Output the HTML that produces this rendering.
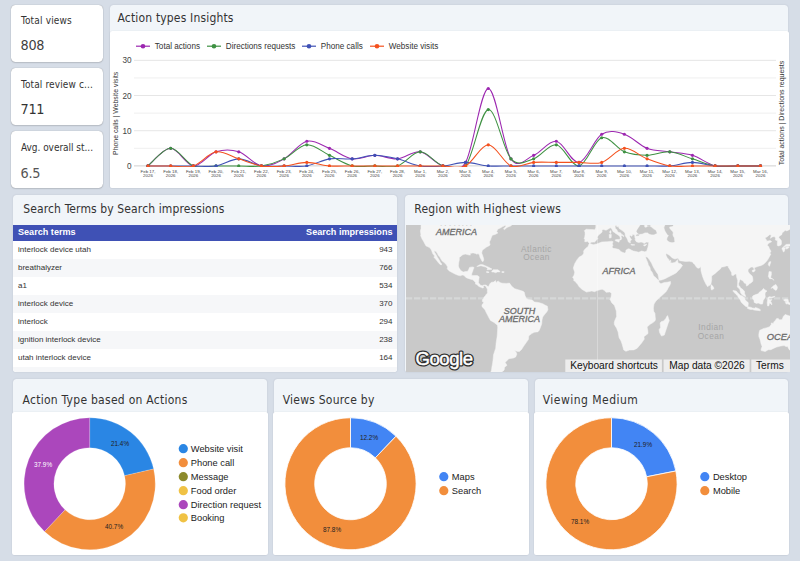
<!DOCTYPE html>
<html><head><meta charset="utf-8"><title>Dashboard</title>
<style>
html,body{margin:0;padding:0}
body{width:800px;height:561px;overflow:hidden;background:#d6dde7;position:relative;font-family:"Liberation Sans",sans-serif}
.abs{position:absolute}
.card{position:absolute;left:11.3px;width:92px;height:56.9px;background:#fff;border-radius:4.5px;box-shadow:0 0 1px rgba(0,0,0,.38),0 1px 1.5px rgba(0,0,0,.12)}
.card .l{position:absolute;left:9.7px;top:10.1px;font:10px "DejaVu Sans Condensed","Liberation Sans",sans-serif;letter-spacing:.17px;color:#333;white-space:nowrap}
.card .v{position:absolute;left:9.3px;top:31.7px;font:14.3px "DejaVu Sans Condensed","Liberation Sans",sans-serif;letter-spacing:-.3px;color:#444;white-space:nowrap}
.panel{position:absolute;background:#f1f5f9;border-radius:3.5px 3.5px 2px 2px;box-shadow:0 0 1.5px rgba(40,50,70,.18)}
.panel .t{position:absolute;left:7.5px;top:5.5px;font:12px "DejaVu Sans Condensed","Liberation Sans",sans-serif;letter-spacing:.17px;color:#333;white-space:nowrap}
.inner{position:absolute;left:-.9px;right:-.9px;bottom:0;background:#fff;border-radius:2.5px 2.5px 2px 2px;box-shadow:0 0 1.5px rgba(40,50,70,.12)}
.th{height:16px;background:#3f51b5;color:#fff;font:bold 9.1px/15.4px "Liberation Sans",sans-serif;padding:0 4.5px 0 5px;display:flex;justify-content:space-between}
.tr{height:18px;font:8px/17.3px "Liberation Sans",sans-serif;color:#333;padding:0 4.5px 0 5px;background:#fff;display:flex;justify-content:space-between}
.tr.alt{background:#f6f7f9}
</style></head><body>
<div class="card" style="top:4.9px"><div class="l" style="top:9.8px">Total views</div><div class="v" style="top:31.8px;color:#3f3f3f">808</div></div>
<div class="card" style="top:67.8px"><div class="l" style="top:10.9px;letter-spacing:.13px">Total review c...</div><div class="v" style="top:32.9px;color:#333">711</div></div>
<div class="card" style="top:131.3px"><div class="l" style="top:10.4px;letter-spacing:-.03px">Avg. overall st...</div><div class="v" style="top:33.4px;color:#555">6.5</div></div>

<div class="panel" style="left:110.3px;top:5px;width:677.8px;height:183px"><div class="t" style="top:5.9px;left:7.2px">Action types Insights</div><div class="inner" style="top:26px;left:-.4px"></div></div>
<svg class="abs" style="left:0;top:0" width="800" height="195" viewBox="0 0 800 195"><line x1="134" x2="776" y1="165.9" y2="165.9" stroke="#d0d0d0" stroke-width="1"/><line x1="134" x2="776" y1="148.31" y2="148.31" stroke="#efefef" stroke-width="1"/><line x1="134" x2="776" y1="130.72" y2="130.72" stroke="#e6e6e6" stroke-width="1"/><line x1="134" x2="776" y1="113.12" y2="113.12" stroke="#efefef" stroke-width="1"/><line x1="134" x2="776" y1="95.53" y2="95.53" stroke="#e6e6e6" stroke-width="1"/><line x1="134" x2="776" y1="77.94" y2="77.94" stroke="#efefef" stroke-width="1"/><line x1="134" x2="776" y1="60.35" y2="60.35" stroke="#e6e6e6" stroke-width="1"/><clipPath id="cp"><rect x="134" y="50" width="645" height="117.1"/></clipPath><g clip-path="url(#cp)"><path d="M148,165.9C151.78,162.97 163.12,148.31 170.69,148.31C178.25,148.31 185.81,165.31 193.37,165.9C200.93,166.49 208.49,154.17 216.06,151.83C223.62,149.48 231.18,149.48 238.74,151.83C246.3,154.17 253.86,164.73 261.43,165.9C268.99,167.07 276.55,162.97 284.11,158.86C291.67,154.76 299.23,143.03 306.8,141.27C314.36,139.51 321.92,145.38 329.48,148.31C337.04,151.24 344.6,157.69 352.17,158.86C359.73,160.04 367.29,155.34 374.85,155.34C382.41,155.34 389.98,159.45 397.54,158.86C405.1,158.28 412.66,150.65 420.22,151.83C427.78,153 435.35,164.14 442.91,165.9C450.47,167.66 458.03,175.28 465.59,162.38C473.15,149.48 480.72,89.08 488.28,88.5C495.84,87.91 503.4,147.72 510.96,158.86C518.52,170 526.09,158.28 533.65,155.34C541.21,152.41 548.77,140.1 556.33,141.27C563.9,142.44 571.46,163.55 579.02,162.38C586.58,161.21 594.14,138.93 601.7,134.24C609.27,129.54 616.83,131.89 624.39,134.24C631.95,136.58 639.51,145.38 647.07,148.31C654.64,151.24 662.2,150.65 669.76,151.83C677.32,153 684.88,153 692.44,155.34C700.01,157.69 707.57,164.14 715.13,165.9C722.69,167.66 730.25,165.9 737.81,165.9C745.38,165.9 756.72,165.9 760.5,165.9" fill="none" stroke="#9c27b0" stroke-width="1.05"/><circle cx="148" cy="165.9" r="1.6" fill="#9c27b0"/><circle cx="170.69" cy="148.31" r="1.6" fill="#9c27b0"/><circle cx="193.37" cy="165.9" r="1.6" fill="#9c27b0"/><circle cx="216.06" cy="151.83" r="1.6" fill="#9c27b0"/><circle cx="238.74" cy="151.83" r="1.6" fill="#9c27b0"/><circle cx="261.43" cy="165.9" r="1.6" fill="#9c27b0"/><circle cx="284.11" cy="158.86" r="1.6" fill="#9c27b0"/><circle cx="306.8" cy="141.27" r="1.6" fill="#9c27b0"/><circle cx="329.48" cy="148.31" r="1.6" fill="#9c27b0"/><circle cx="352.17" cy="158.86" r="1.6" fill="#9c27b0"/><circle cx="374.85" cy="155.34" r="1.6" fill="#9c27b0"/><circle cx="397.54" cy="158.86" r="1.6" fill="#9c27b0"/><circle cx="420.22" cy="151.83" r="1.6" fill="#9c27b0"/><circle cx="442.91" cy="165.9" r="1.6" fill="#9c27b0"/><circle cx="465.59" cy="162.38" r="1.6" fill="#9c27b0"/><circle cx="488.28" cy="88.5" r="1.6" fill="#9c27b0"/><circle cx="510.96" cy="158.86" r="1.6" fill="#9c27b0"/><circle cx="533.65" cy="155.34" r="1.6" fill="#9c27b0"/><circle cx="556.33" cy="141.27" r="1.6" fill="#9c27b0"/><circle cx="579.02" cy="162.38" r="1.6" fill="#9c27b0"/><circle cx="601.7" cy="134.24" r="1.6" fill="#9c27b0"/><circle cx="624.39" cy="134.24" r="1.6" fill="#9c27b0"/><circle cx="647.07" cy="148.31" r="1.6" fill="#9c27b0"/><circle cx="669.76" cy="151.83" r="1.6" fill="#9c27b0"/><circle cx="692.44" cy="155.34" r="1.6" fill="#9c27b0"/><circle cx="715.13" cy="165.9" r="1.6" fill="#9c27b0"/><circle cx="737.81" cy="165.9" r="1.6" fill="#9c27b0"/><circle cx="760.5" cy="165.9" r="1.6" fill="#9c27b0"/><path d="M148,165.9C151.78,162.97 163.12,148.31 170.69,148.31C178.25,148.31 185.81,162.97 193.37,165.9C200.93,168.83 208.49,165.9 216.06,165.9C223.62,165.9 231.18,165.9 238.74,165.9C246.3,165.9 253.86,167.07 261.43,165.9C268.99,164.73 276.55,162.38 284.11,158.86C291.67,155.35 299.23,145.38 306.8,144.79C314.36,144.2 321.92,151.83 329.48,155.34C337.04,158.86 344.6,164.14 352.17,165.9C359.73,167.66 367.29,165.9 374.85,165.9C382.41,165.9 389.98,168.25 397.54,165.9C405.1,163.55 412.66,151.83 420.22,151.83C427.78,151.83 435.35,163.55 442.91,165.9C450.47,168.25 458.03,175.28 465.59,165.9C473.15,156.52 480.72,110.78 488.28,109.61C495.84,108.43 503.4,150.65 510.96,158.86C518.52,167.07 526.09,161.21 533.65,158.86C541.21,156.52 548.77,143.62 556.33,144.79C563.9,145.96 571.46,167.07 579.02,165.9C586.58,164.73 594.14,140.1 601.7,137.75C609.27,135.41 616.83,148.89 624.39,151.83C631.95,154.76 639.51,155.34 647.07,155.34C654.64,155.34 662.2,151.24 669.76,151.83C677.32,152.41 684.88,156.52 692.44,158.86C700.01,161.21 707.57,164.73 715.13,165.9C722.69,167.07 730.25,165.9 737.81,165.9C745.38,165.9 756.72,165.9 760.5,165.9" fill="none" stroke="#3e9142" stroke-width="1.05"/><circle cx="148" cy="165.9" r="1.6" fill="#3e9142"/><circle cx="170.69" cy="148.31" r="1.6" fill="#3e9142"/><circle cx="193.37" cy="165.9" r="1.6" fill="#3e9142"/><circle cx="216.06" cy="165.9" r="1.6" fill="#3e9142"/><circle cx="238.74" cy="165.9" r="1.6" fill="#3e9142"/><circle cx="261.43" cy="165.9" r="1.6" fill="#3e9142"/><circle cx="284.11" cy="158.86" r="1.6" fill="#3e9142"/><circle cx="306.8" cy="144.79" r="1.6" fill="#3e9142"/><circle cx="329.48" cy="155.34" r="1.6" fill="#3e9142"/><circle cx="352.17" cy="165.9" r="1.6" fill="#3e9142"/><circle cx="374.85" cy="165.9" r="1.6" fill="#3e9142"/><circle cx="397.54" cy="165.9" r="1.6" fill="#3e9142"/><circle cx="420.22" cy="151.83" r="1.6" fill="#3e9142"/><circle cx="442.91" cy="165.9" r="1.6" fill="#3e9142"/><circle cx="465.59" cy="165.9" r="1.6" fill="#3e9142"/><circle cx="488.28" cy="109.61" r="1.6" fill="#3e9142"/><circle cx="510.96" cy="158.86" r="1.6" fill="#3e9142"/><circle cx="533.65" cy="158.86" r="1.6" fill="#3e9142"/><circle cx="556.33" cy="144.79" r="1.6" fill="#3e9142"/><circle cx="579.02" cy="165.9" r="1.6" fill="#3e9142"/><circle cx="601.7" cy="137.75" r="1.6" fill="#3e9142"/><circle cx="624.39" cy="151.83" r="1.6" fill="#3e9142"/><circle cx="647.07" cy="155.34" r="1.6" fill="#3e9142"/><circle cx="669.76" cy="151.83" r="1.6" fill="#3e9142"/><circle cx="692.44" cy="158.86" r="1.6" fill="#3e9142"/><circle cx="715.13" cy="165.9" r="1.6" fill="#3e9142"/><circle cx="737.81" cy="165.9" r="1.6" fill="#3e9142"/><circle cx="760.5" cy="165.9" r="1.6" fill="#3e9142"/><path d="M148,165.9C151.78,165.9 163.12,165.9 170.69,165.9C178.25,165.9 185.81,165.9 193.37,165.9C200.93,165.9 208.49,167.07 216.06,165.9C223.62,164.73 231.18,158.86 238.74,158.86C246.3,158.86 253.86,164.73 261.43,165.9C268.99,167.07 276.55,165.9 284.11,165.9C291.67,165.9 299.23,167.07 306.8,165.9C314.36,164.73 321.92,160.04 329.48,158.86C337.04,157.69 344.6,159.45 352.17,158.86C359.73,158.28 367.29,155.34 374.85,155.34C382.41,155.34 389.98,157.1 397.54,158.86C405.1,160.62 412.66,164.73 420.22,165.9C427.78,167.07 435.35,166.49 442.91,165.9C450.47,165.31 458.03,162.38 465.59,162.38C473.15,162.38 480.72,165.31 488.28,165.9C495.84,166.49 503.4,165.9 510.96,165.9C518.52,165.9 526.09,165.9 533.65,165.9C541.21,165.9 548.77,165.9 556.33,165.9C563.9,165.9 571.46,165.9 579.02,165.9C586.58,165.9 594.14,165.9 601.7,165.9C609.27,165.9 616.83,165.9 624.39,165.9C631.95,165.9 639.51,165.9 647.07,165.9C654.64,165.9 662.2,166.49 669.76,165.9C677.32,165.31 684.88,162.38 692.44,162.38C700.01,162.38 707.57,165.31 715.13,165.9C722.69,166.49 730.25,165.9 737.81,165.9C745.38,165.9 756.72,165.9 760.5,165.9" fill="none" stroke="#3f51b5" stroke-width="1.05"/><circle cx="148" cy="165.9" r="1.6" fill="#3f51b5"/><circle cx="170.69" cy="165.9" r="1.6" fill="#3f51b5"/><circle cx="193.37" cy="165.9" r="1.6" fill="#3f51b5"/><circle cx="216.06" cy="165.9" r="1.6" fill="#3f51b5"/><circle cx="238.74" cy="158.86" r="1.6" fill="#3f51b5"/><circle cx="261.43" cy="165.9" r="1.6" fill="#3f51b5"/><circle cx="284.11" cy="165.9" r="1.6" fill="#3f51b5"/><circle cx="306.8" cy="165.9" r="1.6" fill="#3f51b5"/><circle cx="329.48" cy="158.86" r="1.6" fill="#3f51b5"/><circle cx="352.17" cy="158.86" r="1.6" fill="#3f51b5"/><circle cx="374.85" cy="155.34" r="1.6" fill="#3f51b5"/><circle cx="397.54" cy="158.86" r="1.6" fill="#3f51b5"/><circle cx="420.22" cy="165.9" r="1.6" fill="#3f51b5"/><circle cx="442.91" cy="165.9" r="1.6" fill="#3f51b5"/><circle cx="465.59" cy="162.38" r="1.6" fill="#3f51b5"/><circle cx="488.28" cy="165.9" r="1.6" fill="#3f51b5"/><circle cx="510.96" cy="165.9" r="1.6" fill="#3f51b5"/><circle cx="533.65" cy="165.9" r="1.6" fill="#3f51b5"/><circle cx="556.33" cy="165.9" r="1.6" fill="#3f51b5"/><circle cx="579.02" cy="165.9" r="1.6" fill="#3f51b5"/><circle cx="601.7" cy="165.9" r="1.6" fill="#3f51b5"/><circle cx="624.39" cy="165.9" r="1.6" fill="#3f51b5"/><circle cx="647.07" cy="165.9" r="1.6" fill="#3f51b5"/><circle cx="669.76" cy="165.9" r="1.6" fill="#3f51b5"/><circle cx="692.44" cy="162.38" r="1.6" fill="#3f51b5"/><circle cx="715.13" cy="165.9" r="1.6" fill="#3f51b5"/><circle cx="737.81" cy="165.9" r="1.6" fill="#3f51b5"/><circle cx="760.5" cy="165.9" r="1.6" fill="#3f51b5"/><path d="M148,165.9C151.78,165.9 163.12,165.9 170.69,165.9C178.25,165.9 185.81,168.25 193.37,165.9C200.93,163.55 208.49,153 216.06,151.83C223.62,150.65 231.18,156.52 238.74,158.86C246.3,161.21 253.86,164.73 261.43,165.9C268.99,167.07 276.55,166.49 284.11,165.9C291.67,165.31 299.23,162.38 306.8,162.38C314.36,162.38 321.92,165.31 329.48,165.9C337.04,166.49 344.6,165.9 352.17,165.9C359.73,165.9 367.29,165.9 374.85,165.9C382.41,165.9 389.98,165.9 397.54,165.9C405.1,165.9 412.66,165.9 420.22,165.9C427.78,165.9 435.35,165.9 442.91,165.9C450.47,165.9 458.03,169.42 465.59,165.9C473.15,162.38 480.72,144.79 488.28,144.79C495.84,144.79 503.4,162.97 510.96,165.9C518.52,168.83 526.09,162.97 533.65,162.38C541.21,161.8 548.77,162.38 556.33,162.38C563.9,162.38 571.46,162.38 579.02,162.38C586.58,162.38 594.14,164.73 601.7,162.38C609.27,160.04 616.83,148.89 624.39,148.31C631.95,147.72 639.51,155.93 647.07,158.86C654.64,161.8 662.2,164.73 669.76,165.9C677.32,167.07 684.88,165.9 692.44,165.9C700.01,165.9 707.57,165.9 715.13,165.9C722.69,165.9 730.25,165.9 737.81,165.9C745.38,165.9 756.72,165.9 760.5,165.9" fill="none" stroke="#f4511e" stroke-width="1.05"/><circle cx="148" cy="165.9" r="1.6" fill="#f4511e"/><circle cx="170.69" cy="165.9" r="1.6" fill="#f4511e"/><circle cx="193.37" cy="165.9" r="1.6" fill="#f4511e"/><circle cx="216.06" cy="151.83" r="1.6" fill="#f4511e"/><circle cx="238.74" cy="158.86" r="1.6" fill="#f4511e"/><circle cx="261.43" cy="165.9" r="1.6" fill="#f4511e"/><circle cx="284.11" cy="165.9" r="1.6" fill="#f4511e"/><circle cx="306.8" cy="162.38" r="1.6" fill="#f4511e"/><circle cx="329.48" cy="165.9" r="1.6" fill="#f4511e"/><circle cx="352.17" cy="165.9" r="1.6" fill="#f4511e"/><circle cx="374.85" cy="165.9" r="1.6" fill="#f4511e"/><circle cx="397.54" cy="165.9" r="1.6" fill="#f4511e"/><circle cx="420.22" cy="165.9" r="1.6" fill="#f4511e"/><circle cx="442.91" cy="165.9" r="1.6" fill="#f4511e"/><circle cx="465.59" cy="165.9" r="1.6" fill="#f4511e"/><circle cx="488.28" cy="144.79" r="1.6" fill="#f4511e"/><circle cx="510.96" cy="165.9" r="1.6" fill="#f4511e"/><circle cx="533.65" cy="162.38" r="1.6" fill="#f4511e"/><circle cx="556.33" cy="162.38" r="1.6" fill="#f4511e"/><circle cx="579.02" cy="162.38" r="1.6" fill="#f4511e"/><circle cx="601.7" cy="162.38" r="1.6" fill="#f4511e"/><circle cx="624.39" cy="148.31" r="1.6" fill="#f4511e"/><circle cx="647.07" cy="158.86" r="1.6" fill="#f4511e"/><circle cx="669.76" cy="165.9" r="1.6" fill="#f4511e"/><circle cx="692.44" cy="165.9" r="1.6" fill="#f4511e"/><circle cx="715.13" cy="165.9" r="1.6" fill="#f4511e"/><circle cx="737.81" cy="165.9" r="1.6" fill="#f4511e"/><circle cx="760.5" cy="165.9" r="1.6" fill="#f4511e"/></g><text x="131.5" y="168.9" text-anchor="end" font-size="8.2" fill="#444" font-family='Liberation Sans',sans-serif>0</text><text x="131.5" y="133.72" text-anchor="end" font-size="8.2" fill="#444" font-family='Liberation Sans',sans-serif>10</text><text x="131.5" y="98.53" text-anchor="end" font-size="8.2" fill="#444" font-family='Liberation Sans',sans-serif>20</text><text x="131.5" y="63.35" text-anchor="end" font-size="8.2" fill="#444" font-family='Liberation Sans',sans-serif>30</text><text x="148" y="172.7" text-anchor="middle" font-size="4.4" fill="#444" font-family='Liberation Sans',sans-serif>Feb 17,</text><text x="148" y="177.3" text-anchor="middle" font-size="4.4" fill="#444" font-family='Liberation Sans',sans-serif>2026</text><text x="170.69" y="172.7" text-anchor="middle" font-size="4.4" fill="#444" font-family='Liberation Sans',sans-serif>Feb 18,</text><text x="170.69" y="177.3" text-anchor="middle" font-size="4.4" fill="#444" font-family='Liberation Sans',sans-serif>2026</text><text x="193.37" y="172.7" text-anchor="middle" font-size="4.4" fill="#444" font-family='Liberation Sans',sans-serif>Feb 19,</text><text x="193.37" y="177.3" text-anchor="middle" font-size="4.4" fill="#444" font-family='Liberation Sans',sans-serif>2026</text><text x="216.06" y="172.7" text-anchor="middle" font-size="4.4" fill="#444" font-family='Liberation Sans',sans-serif>Feb 20,</text><text x="216.06" y="177.3" text-anchor="middle" font-size="4.4" fill="#444" font-family='Liberation Sans',sans-serif>2026</text><text x="238.74" y="172.7" text-anchor="middle" font-size="4.4" fill="#444" font-family='Liberation Sans',sans-serif>Feb 21,</text><text x="238.74" y="177.3" text-anchor="middle" font-size="4.4" fill="#444" font-family='Liberation Sans',sans-serif>2026</text><text x="261.43" y="172.7" text-anchor="middle" font-size="4.4" fill="#444" font-family='Liberation Sans',sans-serif>Feb 22,</text><text x="261.43" y="177.3" text-anchor="middle" font-size="4.4" fill="#444" font-family='Liberation Sans',sans-serif>2026</text><text x="284.11" y="172.7" text-anchor="middle" font-size="4.4" fill="#444" font-family='Liberation Sans',sans-serif>Feb 23,</text><text x="284.11" y="177.3" text-anchor="middle" font-size="4.4" fill="#444" font-family='Liberation Sans',sans-serif>2026</text><text x="306.8" y="172.7" text-anchor="middle" font-size="4.4" fill="#444" font-family='Liberation Sans',sans-serif>Feb 24,</text><text x="306.8" y="177.3" text-anchor="middle" font-size="4.4" fill="#444" font-family='Liberation Sans',sans-serif>2026</text><text x="329.48" y="172.7" text-anchor="middle" font-size="4.4" fill="#444" font-family='Liberation Sans',sans-serif>Feb 25,</text><text x="329.48" y="177.3" text-anchor="middle" font-size="4.4" fill="#444" font-family='Liberation Sans',sans-serif>2026</text><text x="352.17" y="172.7" text-anchor="middle" font-size="4.4" fill="#444" font-family='Liberation Sans',sans-serif>Feb 26,</text><text x="352.17" y="177.3" text-anchor="middle" font-size="4.4" fill="#444" font-family='Liberation Sans',sans-serif>2026</text><text x="374.85" y="172.7" text-anchor="middle" font-size="4.4" fill="#444" font-family='Liberation Sans',sans-serif>Feb 27,</text><text x="374.85" y="177.3" text-anchor="middle" font-size="4.4" fill="#444" font-family='Liberation Sans',sans-serif>2026</text><text x="397.54" y="172.7" text-anchor="middle" font-size="4.4" fill="#444" font-family='Liberation Sans',sans-serif>Feb 28,</text><text x="397.54" y="177.3" text-anchor="middle" font-size="4.4" fill="#444" font-family='Liberation Sans',sans-serif>2026</text><text x="420.22" y="172.7" text-anchor="middle" font-size="4.4" fill="#444" font-family='Liberation Sans',sans-serif>Mar 1,</text><text x="420.22" y="177.3" text-anchor="middle" font-size="4.4" fill="#444" font-family='Liberation Sans',sans-serif>2026</text><text x="442.91" y="172.7" text-anchor="middle" font-size="4.4" fill="#444" font-family='Liberation Sans',sans-serif>Mar 2,</text><text x="442.91" y="177.3" text-anchor="middle" font-size="4.4" fill="#444" font-family='Liberation Sans',sans-serif>2026</text><text x="465.59" y="172.7" text-anchor="middle" font-size="4.4" fill="#444" font-family='Liberation Sans',sans-serif>Mar 3,</text><text x="465.59" y="177.3" text-anchor="middle" font-size="4.4" fill="#444" font-family='Liberation Sans',sans-serif>2026</text><text x="488.28" y="172.7" text-anchor="middle" font-size="4.4" fill="#444" font-family='Liberation Sans',sans-serif>Mar 4,</text><text x="488.28" y="177.3" text-anchor="middle" font-size="4.4" fill="#444" font-family='Liberation Sans',sans-serif>2026</text><text x="510.96" y="172.7" text-anchor="middle" font-size="4.4" fill="#444" font-family='Liberation Sans',sans-serif>Mar 5,</text><text x="510.96" y="177.3" text-anchor="middle" font-size="4.4" fill="#444" font-family='Liberation Sans',sans-serif>2026</text><text x="533.65" y="172.7" text-anchor="middle" font-size="4.4" fill="#444" font-family='Liberation Sans',sans-serif>Mar 6,</text><text x="533.65" y="177.3" text-anchor="middle" font-size="4.4" fill="#444" font-family='Liberation Sans',sans-serif>2026</text><text x="556.33" y="172.7" text-anchor="middle" font-size="4.4" fill="#444" font-family='Liberation Sans',sans-serif>Mar 7,</text><text x="556.33" y="177.3" text-anchor="middle" font-size="4.4" fill="#444" font-family='Liberation Sans',sans-serif>2026</text><text x="579.02" y="172.7" text-anchor="middle" font-size="4.4" fill="#444" font-family='Liberation Sans',sans-serif>Mar 8,</text><text x="579.02" y="177.3" text-anchor="middle" font-size="4.4" fill="#444" font-family='Liberation Sans',sans-serif>2026</text><text x="601.7" y="172.7" text-anchor="middle" font-size="4.4" fill="#444" font-family='Liberation Sans',sans-serif>Mar 9,</text><text x="601.7" y="177.3" text-anchor="middle" font-size="4.4" fill="#444" font-family='Liberation Sans',sans-serif>2026</text><text x="624.39" y="172.7" text-anchor="middle" font-size="4.4" fill="#444" font-family='Liberation Sans',sans-serif>Mar 10,</text><text x="624.39" y="177.3" text-anchor="middle" font-size="4.4" fill="#444" font-family='Liberation Sans',sans-serif>2026</text><text x="647.07" y="172.7" text-anchor="middle" font-size="4.4" fill="#444" font-family='Liberation Sans',sans-serif>Mar 11,</text><text x="647.07" y="177.3" text-anchor="middle" font-size="4.4" fill="#444" font-family='Liberation Sans',sans-serif>2026</text><text x="669.76" y="172.7" text-anchor="middle" font-size="4.4" fill="#444" font-family='Liberation Sans',sans-serif>Mar 12,</text><text x="669.76" y="177.3" text-anchor="middle" font-size="4.4" fill="#444" font-family='Liberation Sans',sans-serif>2026</text><text x="692.44" y="172.7" text-anchor="middle" font-size="4.4" fill="#444" font-family='Liberation Sans',sans-serif>Mar 13,</text><text x="692.44" y="177.3" text-anchor="middle" font-size="4.4" fill="#444" font-family='Liberation Sans',sans-serif>2026</text><text x="715.13" y="172.7" text-anchor="middle" font-size="4.4" fill="#444" font-family='Liberation Sans',sans-serif>Mar 14,</text><text x="715.13" y="177.3" text-anchor="middle" font-size="4.4" fill="#444" font-family='Liberation Sans',sans-serif>2026</text><text x="737.81" y="172.7" text-anchor="middle" font-size="4.4" fill="#444" font-family='Liberation Sans',sans-serif>Mar 15,</text><text x="737.81" y="177.3" text-anchor="middle" font-size="4.4" fill="#444" font-family='Liberation Sans',sans-serif>2026</text><text x="760.5" y="172.7" text-anchor="middle" font-size="4.4" fill="#444" font-family='Liberation Sans',sans-serif>Mar 16,</text><text x="760.5" y="177.3" text-anchor="middle" font-size="4.4" fill="#444" font-family='Liberation Sans',sans-serif>2026</text><text transform="translate(117.8,113.3) rotate(-90)" text-anchor="middle" font-size="6.9" fill="#333" font-family='Liberation Sans',sans-serif>Phone calls | Website visits</text><text transform="translate(784.3,113) rotate(-90)" text-anchor="middle" font-size="7" fill="#333" font-family='Liberation Sans',sans-serif>Total actions | Directions requests</text><line x1="136" x2="150" y1="46.2" y2="46.2" stroke="#9c27b0" stroke-width="1.2"/><circle cx="143" cy="46.2" r="2.3" fill="#9c27b0"/><text x="154.8" y="48.8" font-size="8.15" fill="#333" font-family='Liberation Sans',sans-serif>Total actions</text><line x1="207" x2="221" y1="46.2" y2="46.2" stroke="#3e9142" stroke-width="1.2"/><circle cx="214" cy="46.2" r="2.3" fill="#3e9142"/><text x="225.8" y="48.8" font-size="8.15" fill="#333" font-family='Liberation Sans',sans-serif>Directions requests</text><line x1="302" x2="316" y1="46.2" y2="46.2" stroke="#3f51b5" stroke-width="1.2"/><circle cx="309" cy="46.2" r="2.3" fill="#3f51b5"/><text x="320.8" y="48.8" font-size="8.15" fill="#333" font-family='Liberation Sans',sans-serif>Phone calls</text><line x1="370" x2="384" y1="46.2" y2="46.2" stroke="#f4511e" stroke-width="1.2"/><circle cx="377" cy="46.2" r="2.3" fill="#f4511e"/><text x="388.8" y="48.8" font-size="8.15" fill="#333" font-family='Liberation Sans',sans-serif>Website visits</text></svg>
<div class="panel" style="left:13px;top:195px;width:384px;height:177px"><div class="t" style="left:10.3px;top:6.5px;letter-spacing:.12px">Search Terms by Search impressions</div></div>
<div class="abs" style="left:13px;top:225px;width:384px;height:147px;overflow:hidden;border-radius:0 0 4px 4px;background:#fff"><div class="th"><span>Search terms</span><span>Search impressions</span></div><div class="tr"><span>interlock device utah</span><span>943</span></div><div class="tr alt"><span>breathalyzer</span><span>766</span></div><div class="tr"><span>a1</span><span>534</span></div><div class="tr alt"><span>interlock device</span><span>370</span></div><div class="tr"><span>interlock</span><span>294</span></div><div class="tr alt"><span>ignition interlock device</span><span>238</span></div><div class="tr"><span>utah interlock device</span><span>164</span></div><div class="tr alt"><span>interlock violation</span><span>98</span></div></div>
<div class="panel" style="left:405px;top:195px;width:383px;height:177px"><div class="t" style="left:9.3px;top:6.5px;letter-spacing:.2px">Region with Highest views</div></div>
<svg class="abs" style="left:406.0px;top:224.5px" width="384.0" height="147.5" viewBox="0 0 384.0 147.5"><rect width="384.0" height="147.5" fill="#c9c9c9"/><line x1="0" x2="384.0" y1="73.4" y2="73.4" stroke="#d6d8d8" stroke-width="2.3" stroke-dasharray="6.2 1.8"/><path d="M6.6,-20.7L14.1,-5.5L15.1,-1.1L15.0,3.6L14.4,5.9L14.9,9.4L14.6,10.5L15.4,12.5L16.6,14.9L17.3,15.8L18.1,17.4L20.0,20.9L22.0,21.8L23.1,22.3L24.8,24.1L25.7,25.7L26.8,28.8L28.7,31.1L27.8,32.2L29.4,33.7L31.9,37.1L33.8,39.2L35.2,39.9L35.9,39.0L34.6,37.8L33.2,35.1L31.4,32.2L30.1,29.8L28.4,27.0L28.2,25.7L30.1,26.5L31.4,28.6L32.4,30.6L33.8,32.1L35.9,35.7L38.2,37.6L40.2,39.5L41.7,42.1L41.2,43.8L43.2,45.9L46.1,47.5L49.4,49.2L52.1,50.3L54.3,50.8L56.1,50.0L57.8,50.3L59.9,52.4L62.1,53.4L64.9,54.3L66.9,54.8L68.3,56.2L69.5,57.5L69.5,59.1L70.9,59.5L72.6,61.3L73.6,61.8L75.4,62.6L76.4,63.0L77.7,62.7L77.3,61.6L78.4,60.5L80.0,61.4L80.7,63.0L81.4,64.1L81.3,67.4L81.8,67.8L79.9,69.8L79.4,70.8L78.1,72.0L77.6,73.4L76.4,74.8L76.3,76.5L77.7,77.1L77.3,78.2L75.9,80.1L76.2,81.9L77.9,83.4L79.1,85.0L79.7,86.4L81.8,90.6L83.1,93.1L84.5,95.4L88.1,97.5L91.5,100.2L91.7,102.7L91.4,108.0L91.1,111.7L90.1,118.0L89.7,123.2L87.5,129.8L87.0,135.2L86.5,139.0L86.0,141.3L85.5,145.2L84.1,149.3L84.8,160.3L94.8,160.3L96.9,149.3L95.5,147.2L98.1,145.2L98.6,142.2L101.0,140.3L99.1,137.4L102.9,133.7L107.6,133.0L109.7,131.9L110.9,129.0L110.0,127.1L108.4,125.6L111.6,126.4L113.4,126.6L115.6,124.4L117.4,121.6L120.4,117.3L122.5,114.3L122.7,110.9L125.7,108.6L128.2,107.3L130.1,107.0L131.8,106.9L133.3,105.2L134.2,102.9L135.7,99.0L136.0,95.0L136.7,92.0L138.9,89.1L140.7,87.1L141.9,84.8L141.4,81.2L138.9,80.1L136.7,78.7L132.5,77.5L128.5,77.0L126.1,75.0L122.5,74.4L120.4,73.4L119.0,70.6L118.3,67.3L117.1,66.3L113.0,65.0L108.7,63.7L105.5,61.1L103.5,58.1L100.5,58.4L96.2,58.2L94.4,57.7L91.9,55.9L90.1,57.7L89.5,55.6L87.7,57.1L86.0,57.2L85.1,57.5L84.1,58.5L82.3,62.0L81.4,61.0L79.9,60.0L77.9,60.0L76.3,60.8L74.6,60.3L73.5,59.1L72.5,57.7L72.7,55.5L73.2,51.8L71.3,50.6L69.2,50.5L67.1,50.6L65.6,50.6L65.9,48.1L66.6,46.6L67.2,44.4L68.1,42.5L66.3,41.9L63.5,42.4L62.6,44.7L61.4,46.6L59.5,46.5L57.2,47.1L54.8,45.6L53.1,43.1L52.4,41.0L52.7,37.4L53.3,35.2L53.3,32.4L55.3,30.9L56.7,29.8L59.2,29.1L61.4,29.6L63.2,30.1L64.4,30.1L64.1,28.5L66.3,28.1L67.5,28.1L69.8,28.5L70.6,29.3L72.0,28.6L73.5,30.1L73.9,32.2L75.2,34.6L76.2,36.5L77.2,36.3L77.6,35.4L77.7,34.0L76.9,31.2L75.7,28.1L76.3,25.3L77.9,24.1L80.6,22.1L82.7,20.9L84.1,19.9L83.4,16.9L84.7,14.4L85.0,13.3L86.3,10.3L89.1,9.4L91.9,8.0L90.7,6.7L91.7,4.2L94.8,2.8L96.2,1.8L97.6,1.2L99.3,0.2L99.9,1.2L97.5,4.0L98.6,4.6L101.0,2.4L104.7,1.0L106.2,-0.4L106.2,-20.7ZM70.8,41.5L73.5,39.9L74.9,39.5L77.0,39.8L79.1,40.7L82.0,41.9L84.1,43.1L86.0,44.1L84.8,44.5L81.0,44.7L81.7,43.4L79.9,42.1L77.0,41.3L74.9,40.7L72.7,41.3ZM85.7,46.5L87.1,44.7L89.5,44.7L91.9,44.8L94.2,46.5L93.4,46.9L91.2,46.9L89.8,47.8L87.7,47.1L85.7,46.9ZM80.1,46.9L82.0,46.6L83.1,47.4L81.7,47.7ZM95.9,46.6L98.2,46.8L97.9,47.5L95.9,47.5ZM183.1,18.8L184.0,18.6L187.2,19.7L190.1,19.0L190.6,19.0L195.8,17.0L201.5,16.7L205.4,16.2L207.1,16.7L206.4,18.5L206.9,20.7L205.9,22.1L207.3,23.3L210.3,23.8L213.1,24.6L215.1,26.7L218.5,28.1L219.9,27.0L219.9,25.2L222.1,23.8L223.6,24.0L225.6,25.2L227.3,26.0L229.9,26.5L232.7,27.2L234.0,26.7L235.6,26.0L237.4,26.5L238.4,28.6L239.6,31.9L240.0,33.5L242.0,38.2L242.3,39.8L244.1,42.8L244.4,45.0L246.3,47.4L247.7,50.9L249.8,52.6L251.9,54.8L253.1,55.5L252.8,56.8L254.1,58.4L255.5,58.5L258.3,57.5L261.2,57.2L264.5,56.5L264.6,58.5L263.7,60.5L262.3,62.7L261.2,64.9L259.8,67.0L255.9,70.6L251.9,74.0L249.8,76.2L248.0,79.1L247.4,83.1L247.7,86.3L249.0,88.4L249.2,92.0L249.5,94.2L249.1,95.7L247.0,97.6L244.1,99.3L241.1,102.1L241.8,105.5L242.0,108.6L237.9,111.7L238.3,114.1L235.6,118.0L231.2,123.2L227.9,124.9L223.5,125.0L219.9,126.3L217.7,124.9L217.1,122.7L216.1,119.0L215.0,115.9L213.1,112.7L212.1,107.0L210.6,103.2L208.3,99.4L208.3,97.2L208.9,95.3L210.6,91.5L210.3,86.0L209.0,82.1L208.3,80.2L205.7,77.7L204.3,74.8L203.9,74.4L204.9,72.8L205.3,70.6L205.4,68.4L205.0,67.7L203.6,67.0L200.0,67.3L198.6,65.6L196.3,64.3L194.9,64.4L191.2,65.6L188.5,66.7L185.8,66.0L183.0,66.6L180.5,67.1L176.1,64.4L172.7,61.3L172.0,59.8L170.2,57.7L169.3,56.4L167.7,55.5L167.9,54.0L166.6,52.3L168.0,50.3L168.7,47.2L167.3,43.1L168.7,38.7L170.9,34.9L173.2,32.1L175.9,30.6L177.0,29.6L177.8,28.0L177.6,26.2L178.4,24.8L180.7,22.6L181.8,21.9ZM261.6,90.6L263.3,95.7L262.3,97.9L261.8,99.4L259.8,105.5L258.3,110.1L255.5,111.1L253.7,107.8L253.1,104.7L254.6,102.4L254.1,97.9L255.5,96.5L257.6,96.0L259.8,93.5L260.9,91.3ZM184.4,-20.7L189.4,-2.5L189.8,-0.4L189.8,2.4L188.9,4.8L186.1,4.6L183.0,4.4L180.1,4.2L179.6,4.8L178.3,5.7L179.0,7.1L179.1,9.2L178.7,12.2L178.0,13.6L179.0,14.2L178.7,16.7L180.3,16.7L181.7,16.3L182.5,17.6L183.5,18.5L184.0,18.3L185.2,17.2L188.1,17.0L188.4,17.2L190.1,15.6L191.8,13.6L191.1,12.2L192.8,9.7L194.6,8.6L196.2,6.9L195.9,5.3L197.2,4.6L199.2,4.9L200.0,5.3L201.9,4.2L204.2,2.8L205.4,3.4L206.1,4.6L207.1,6.7L208.3,7.3L209.0,8.0L211.7,9.7L213.7,11.2L214.3,13.1L213.8,14.9L215.0,14.9L215.8,13.1L215.0,11.8L216.0,10.3L217.1,11.4L217.7,11.6L217.8,10.9L217.1,10.1L215.5,9.2L214.5,7.7L212.8,7.5L211.7,6.5L210.7,4.4L209.4,3.4L209.1,1.6L209.0,0.8L211.1,0.4L210.7,1.6L211.3,2.0L212.0,1.0L212.8,2.6L213.1,3.4L214.8,4.6L217.2,6.3L218.8,7.7L219.1,8.8L219.2,10.5L219.9,11.8L220.9,13.3L221.5,14.4L221.8,15.4L222.4,17.0L223.5,17.8L224.5,17.8L224.2,16.2L225.2,15.1L225.6,14.5L224.6,13.3L224.1,12.5L223.6,11.2L224.1,10.1L225.2,11.2L226.2,11.0L226.2,9.6L228.5,9.7L228.8,11.0L228.8,12.2L229.6,14.2L228.9,14.5L230.3,16.7L231.7,17.2L232.9,17.4L235.0,17.0L237.0,17.6L238.1,18.5L240.7,17.0L243.0,17.4L242.4,18.8L242.4,19.3L242.0,22.1L241.3,24.0L241.0,25.2L240.1,26.5L238.4,26.8L237.4,26.5L238.4,28.6L239.7,31.7L240.7,31.9L241.8,32.5L243.6,35.1L245.5,38.1L247.3,42.1L249.1,45.1L251.2,48.4L251.9,49.0L252.5,52.1L252.9,54.3L253.4,55.2L255.5,55.0L259.1,53.7L261.3,52.6L265.7,50.3L268.4,48.9L270.4,47.7L271.9,46.0L273.6,44.4L276.5,40.5L274.8,38.8L272.6,38.2L271.9,37.3L271.7,34.6L271.1,35.4L270.1,36.2L268.9,37.4L266.3,37.9L264.9,37.8L263.7,37.1L264.9,36.7L264.9,36.2L264.5,34.9L263.7,35.9L262.9,35.6L262.8,34.4L261.2,32.7L259.8,29.8L260.5,28.6L263.7,30.4L266.3,32.9L269.0,34.1L271.6,33.2L272.6,34.0L273.7,35.7L277.7,36.2L280.1,36.5L283.2,36.3L286.6,37.0L287.5,38.5L288.9,39.5L289.6,40.9L291.1,42.8L292.5,43.3L294.2,42.5L294.8,40.9L294.9,42.7L295.0,45.9L296.5,51.2L297.9,54.9L299.9,59.1L301.7,61.8L302.7,60.8L304.1,60.1L305.0,58.7L305.7,54.6L305.6,51.1L307.1,49.9L308.5,48.9L310.0,47.8L312.4,45.4L313.5,44.7L315.2,43.1L315.2,42.1L316.9,41.9L318.8,41.6L320.2,40.9L322.1,40.9L322.3,42.2L323.6,44.2L325.5,47.4L325.8,50.3L327.3,50.6L328.5,49.6L329.7,48.9L330.3,49.6L330.6,51.8L331.0,53.3L331.7,55.6L331.6,59.1L331.3,62.0L332.3,62.7L333.7,64.3L334.1,65.7L334.6,67.7L335.6,69.3L336.9,70.3L339.1,71.6L339.8,71.4L338.6,68.4L338.6,66.6L336.9,64.6L335.6,63.6L334.6,63.1L333.7,61.3L332.7,60.3L332.6,58.4L333.4,56.5L333.7,55.3L334.4,54.0L335.0,54.9L335.9,55.3L337.3,56.2L338.0,57.7L338.7,58.2L340.0,58.5L340.5,61.1L342.0,60.3L343.3,59.1L343.8,58.5L345.2,57.8L346.8,56.2L346.9,54.8L346.8,53.6L346.4,51.5L345.4,50.2L343.8,48.9L343.1,48.1L342.0,46.3L342.1,44.7L343.4,43.3L345.0,42.1L346.7,42.1L347.5,43.0L348.2,43.9L348.7,42.5L350.1,42.1L353.1,41.0L353.9,40.9L355.8,40.2L357.5,39.3L359.5,37.4L361.5,35.1L363.3,31.9L364.9,29.0L363.6,28.1L364.9,27.0L364.7,25.7L363.4,23.6L362.6,21.4L361.2,20.2L362.6,18.3L365.7,16.7L364.2,15.6L360.7,16.2L360.7,15.3L359.0,13.1L361.6,11.4L363.6,9.7L365.3,10.1L364.4,13.3L366.4,12.0L368.3,11.4L369.6,13.1L369.3,14.9L371.6,15.8L371.3,17.6L371.3,20.5L372.8,20.9L375.0,20.0L375.5,18.5L375.4,15.8L374.1,14.0L372.8,12.7L373.0,11.6L376.0,9.4L376.1,7.8L377.4,6.9L379.2,5.3L380.9,5.9L383.5,4.6L385.6,2.0L387.8,-1.1L390.6,-20.7ZM209.1,14.9L210.6,14.5L213.7,14.4L213.0,17.2L210.7,16.3L209.1,15.6ZM203.2,9.4L205.3,9.4L205.2,12.7L203.4,13.1ZM203.7,6.5L205.0,5.5L204.9,8.4L203.9,8.0ZM224.9,19.3L228.9,19.9L225.6,20.2ZM237.4,20.2L240.7,19.0L239.7,20.4L238.4,20.9ZM305.0,59.5L307.0,61.3L308.0,63.4L306.7,64.6L305.4,64.9L304.9,62.7L305.0,61.3ZM346.1,45.6L348.7,44.2L349.4,45.0L347.9,46.9L346.5,46.8ZM363.6,36.7L364.9,36.7L363.4,41.3L362.3,39.8L362.7,37.8ZM376.0,23.1L377.8,22.1L379.1,23.3L378.4,26.3L377.4,27.0L376.7,25.3L376.0,24.1ZM377.7,21.9L378.4,20.9L380.1,19.5L382.1,19.3L384.2,19.2L384.9,18.5L386.3,16.3L390.6,14.9L390.6,20.2L386.2,21.4L384.6,22.8L383.9,20.9L382.1,20.9L379.8,21.4ZM379.2,23.1L380.4,21.9L382.4,21.4L383.1,22.3L382.4,23.1L380.7,24.0L379.9,23.6ZM362.6,50.3L363.0,46.6L365.3,46.8L365.4,49.6L364.6,52.6L367.7,54.8L368.0,55.3L366.1,53.6L363.6,53.7L363.0,52.6L362.2,51.1ZM365.0,63.4L367.1,61.1L369.8,59.4L371.4,62.0L371.0,64.4L369.8,65.4L367.9,64.1L366.4,62.7ZM346.5,71.3L347.4,70.6L349.8,69.6L352.2,68.8L353.6,66.9L355.8,65.4L357.6,63.4L359.0,64.9L361.0,66.0L359.3,67.4L359.0,69.1L359.3,72.0L358.6,73.4L357.2,75.5L356.9,77.7L356.5,79.1L354.5,79.1L352.2,78.0L350.5,78.4L348.2,77.4L347.9,75.2L346.7,73.8L346.5,72.0ZM327.0,65.4L330.2,66.0L331.9,68.1L334.3,70.3L336.3,71.0L338.6,72.7L339.1,74.8L340.3,76.1L342.3,77.7L342.0,81.7L340.1,81.7L337.0,79.1L335.1,77.0L334.1,74.7L332.3,72.3L331.7,71.0L329.7,69.1L327.3,66.6ZM341.1,83.1L342.3,81.8L345.5,82.4L346.0,83.0L348.5,83.2L349.4,82.5L351.6,83.2L354.2,84.4L354.3,85.8L351.8,85.4L347.9,85.0L346.5,84.4L344.4,84.4L342.8,84.0ZM361.2,77.7L361.6,80.9L362.9,80.8L363.6,77.7L365.9,79.9L365.6,78.0L364.4,76.0L366.1,74.7L363.6,74.8L362.6,73.0L367.1,72.5L369.1,71.3L365.7,72.0L362.9,71.7L361.9,73.0L361.6,74.8ZM377.7,74.7L379.7,74.0L382.1,74.5L382.5,77.0L383.5,78.1L384.9,76.5L387.8,75.8L392.0,77.1L392.0,86.3L388.5,85.1L387.1,80.8L384.2,79.7L381.4,78.8L380.4,79.1L379.2,77.4L381.4,76.7L379.5,76.5L377.8,75.4ZM390.6,89.1L386.1,90.9L384.9,90.6L383.5,90.9L380.7,90.0L379.2,89.4L377.5,91.2L376.0,94.7L375.0,94.8L373.5,94.7L372.1,93.4L370.7,93.5L369.3,95.4L367.9,96.9L367.3,98.4L365.3,97.9L365.3,99.4L363.6,101.8L360.2,102.9L357.9,103.4L357.6,103.5L355.1,104.7L353.8,105.2L353.2,107.0L352.8,109.4L352.9,111.7L353.9,114.1L354.5,116.2L355.1,119.0L356.1,121.5L355.1,124.2L355.2,125.6L359.2,126.6L362.2,124.7L364.9,124.7L367.9,123.2L370.7,122.0L374.8,121.0L378.1,120.6L379.9,121.5L381.7,121.6L382.4,123.2L383.5,124.9L384.8,126.1L384.9,126.6L387.1,123.2L387.8,127.5L390.6,130.1Z" fill="#f5f5f5" stroke="#f5f5f5" stroke-width="0.5" stroke-linejoin="round"/><path d="M232.9,9.0L236.2,8.8L239.1,7.5L241.6,7.5L243.1,8.8L245.5,9.4L248.0,9.4L250.7,8.2L249.8,5.5L248.0,4.4L245.3,2.2L243.6,1.2L241.7,1.6L239.9,2.8L239.0,2.4L237.7,0.8L239.1,-0.4L236.7,-1.3L235.2,-1.5L233.7,1.2L232.3,3.2L231.2,5.1L230.6,6.5L231.3,7.7ZM241.3,0.4L243.6,0.8L245.1,-0.4L247.4,-2.7L242.7,-1.9L241.3,-0.9ZM229.9,10.3L231.3,9.4L233.5,9.7L232.7,10.5L230.6,10.7ZM261.2,-1.9L259.1,0.4L258.3,2.6L259.1,5.5L260.2,7.5L261.9,10.1L263.2,10.5L262.5,10.9L261.6,12.5L261.0,14.2L261.9,15.8L264.0,17.0L266.2,17.2L268.3,16.9L268.2,14.9L268.0,12.7L266.9,11.2L266.5,9.4L266.9,7.8L266.2,6.5L264.7,5.1L264.3,4.4L263.0,2.8L264.0,1.6L266.9,1.0L266.9,-1.9Z" fill="#c9c9c9" stroke="#c9c9c9" stroke-width="0.3" stroke-linejoin="round"/><line x1="191.5" x2="191.5" y1="0" y2="147.5" stroke="#ffffff" stroke-opacity="0.4" stroke-width="0.7"/><text x="50.5" y="0.4000000000000057" text-anchor="middle" font-size="9.0" font-style="italic" font-weight="normal" font-family='Liberation Sans',sans-serif fill="#f5f5f5" stroke="#f5f5f5" stroke-width="2" stroke-linejoin="round">NORTH</text><text x="50.5" y="0.4000000000000057" text-anchor="middle" font-size="9.0" font-style="italic" font-weight="normal" font-family='Liberation Sans',sans-serif fill="#6c6c6c" stroke="#6c6c6c" stroke-width="0.3">NORTH</text><text x="50.5" y="9.900000000000006" text-anchor="middle" font-size="9.0" font-style="italic" font-weight="normal" font-family='Liberation Sans',sans-serif fill="#f5f5f5" stroke="#f5f5f5" stroke-width="2" stroke-linejoin="round">AMERICA</text><text x="50.5" y="9.900000000000006" text-anchor="middle" font-size="9.0" font-style="italic" font-weight="normal" font-family='Liberation Sans',sans-serif fill="#6c6c6c" stroke="#6c6c6c" stroke-width="0.3">AMERICA</text><text x="113.5" y="88.5" text-anchor="middle" font-size="9.0" font-style="italic" font-weight="normal" font-family='Liberation Sans',sans-serif fill="#f5f5f5" stroke="#f5f5f5" stroke-width="2" stroke-linejoin="round">SOUTH</text><text x="113.5" y="88.5" text-anchor="middle" font-size="9.0" font-style="italic" font-weight="normal" font-family='Liberation Sans',sans-serif fill="#6c6c6c" stroke="#6c6c6c" stroke-width="0.3">SOUTH</text><text x="113.5" y="97.19999999999999" text-anchor="middle" font-size="9.0" font-style="italic" font-weight="normal" font-family='Liberation Sans',sans-serif fill="#f5f5f5" stroke="#f5f5f5" stroke-width="2" stroke-linejoin="round">AMERICA</text><text x="113.5" y="97.19999999999999" text-anchor="middle" font-size="9.0" font-style="italic" font-weight="normal" font-family='Liberation Sans',sans-serif fill="#6c6c6c" stroke="#6c6c6c" stroke-width="0.3">AMERICA</text><text x="213.0" y="49.0" text-anchor="middle" font-size="9.0" font-style="italic" font-weight="normal" font-family='Liberation Sans',sans-serif fill="#f5f5f5" stroke="#f5f5f5" stroke-width="2" stroke-linejoin="round">AFRICA</text><text x="213.0" y="49.0" text-anchor="middle" font-size="9.0" font-style="italic" font-weight="normal" font-family='Liberation Sans',sans-serif fill="#6c6c6c" stroke="#6c6c6c" stroke-width="0.3">AFRICA</text><text x="381.79999999999995" y="114.5" text-anchor="middle" font-size="9.4" font-style="italic" font-weight="normal" font-family='Liberation Sans',sans-serif fill="#f5f5f5" stroke="#f5f5f5" stroke-width="2" stroke-linejoin="round">OCEANIA</text><text x="381.79999999999995" y="114.5" text-anchor="middle" font-size="9.4" font-style="italic" font-weight="normal" font-family='Liberation Sans',sans-serif fill="#6c6c6c" stroke="#6c6c6c" stroke-width="0.3">OCEANIA</text><text x="130.5" y="26.5" text-anchor="middle" font-size="8.3" letter-spacing="0.45" fill="#a6a6a6" font-family='Liberation Sans',sans-serif>Atlantic</text><text x="130.5" y="35.0" text-anchor="middle" font-size="8.3" letter-spacing="0.45" fill="#a6a6a6" font-family='Liberation Sans',sans-serif>Ocean</text><text x="305.0" y="105.0" text-anchor="middle" font-size="8.3" letter-spacing="0.45" fill="#a6a6a6" font-family='Liberation Sans',sans-serif>Indian</text><text x="305.0" y="113.5" text-anchor="middle" font-size="8.3" letter-spacing="0.45" fill="#a6a6a6" font-family='Liberation Sans',sans-serif>Ocean</text><rect x="159.3" y="134.5" width="96.6" height="13.0" fill="#f0f0f0" fill-opacity="0.92"/><text x="164.2" y="144.3" font-size="10.2" fill="#111" font-family='Liberation Sans',sans-serif>Keyboard shortcuts</text><rect x="257.6" y="134.5" width="86.0" height="13.0" fill="#f0f0f0" fill-opacity="0.92"/><text x="263.3" y="144.3" font-size="10.2" fill="#111" font-family='Liberation Sans',sans-serif>Map data ©2026</text><rect x="345.3" y="134.5" width="38.7" height="13.0" fill="#f0f0f0" fill-opacity="0.92"/><text x="350.0" y="144.3" font-size="10.2" fill="#111" font-family='Liberation Sans',sans-serif>Terms</text><text x="9.4" y="139.5" font-size="18.6" font-family='Liberation Sans',sans-serif fill="#fff" stroke="#2e2e2e" stroke-width="3.1" stroke-linejoin="round" letter-spacing="-0.45">Google</text><text x="9.4" y="139.5" font-size="18.6" font-family='Liberation Sans',sans-serif fill="#fff" stroke="#fff" stroke-width="0.45" stroke-linejoin="round" letter-spacing="-0.45">Google</text></svg>
<div class="panel" style="left:13px;top:379.3px;width:254.3px;height:176px"><div class="t" style="left:9.5px;top:13.3px;letter-spacing:.27px">Action Type based on Actions</div><div class="inner" style="top:32.7px"></div></div>
<div class="panel" style="left:273.9px;top:379.3px;width:254.2px;height:176px"><div class="t" style="left:8.8px;top:13.3px;letter-spacing:.23px">Views Source by</div><div class="inner" style="top:32.7px"></div></div>
<div class="panel" style="left:534.8px;top:379.3px;width:253.6px;height:176px"><div class="t" style="left:7.9px;top:13.3px;letter-spacing:.48px">Viewing Medium</div><div class="inner" style="top:32.7px"></div></div>
<svg class="abs" style="left:0;top:370px" width="800" height="191" viewBox="0 370 800 191"><path d="M89.7,417.75 A65.6,66 0 0 1 153.63,468.95 L124.57,475.68 A35.78,36 0 0 0 89.7,447.75 Z" fill="#2a86e4" stroke="rgba(255,255,255,.45)" stroke-width="0.4"/><path d="M153.63,468.95 A65.6,66 0 0 1 44.49,531.58 L65.04,509.84 A35.78,36 0 0 0 124.57,475.68 Z" fill="#f28e3c" stroke="rgba(255,255,255,.45)" stroke-width="0.4"/><path d="M44.49,531.58 A65.6,66 0 0 1 89.7,417.75 L89.7,447.75 A35.78,36 0 0 0 65.04,509.84 Z" fill="#ab47bc" stroke="rgba(255,255,255,.45)" stroke-width="0.4"/><text x="120" y="446" text-anchor="middle" font-size="6.4" fill="#222" font-family='Liberation Sans',sans-serif>21.4%</text><text x="43" y="467" text-anchor="middle" font-size="6.4" fill="#fff" font-family='Liberation Sans',sans-serif>37.9%</text><text x="114" y="528.5" text-anchor="middle" font-size="6.4" fill="#222" font-family='Liberation Sans',sans-serif>40.7%</text><circle cx="183.3" cy="448.7" r="4.6" fill="#2a86e4"/><text x="190.8" y="452.0" font-size="9.3" fill="#222" font-family='Liberation Sans',sans-serif>Website visit</text><circle cx="183.3" cy="462.7" r="4.6" fill="#f28e3c"/><text x="190.8" y="466.0" font-size="9.3" fill="#222" font-family='Liberation Sans',sans-serif>Phone call</text><circle cx="183.3" cy="476.7" r="4.6" fill="#8c8a2c"/><text x="190.8" y="480.0" font-size="9.3" fill="#222" font-family='Liberation Sans',sans-serif>Message</text><circle cx="183.3" cy="490.7" r="4.6" fill="#f0c244"/><text x="190.8" y="494.0" font-size="9.3" fill="#222" font-family='Liberation Sans',sans-serif>Food order</text><circle cx="183.3" cy="504.7" r="4.6" fill="#ab47bc"/><text x="190.8" y="508.0" font-size="9.3" fill="#222" font-family='Liberation Sans',sans-serif>Direction request</text><circle cx="183.3" cy="517.8" r="4.6" fill="#f0c244"/><text x="190.8" y="521.0999999999999" font-size="9.3" fill="#222" font-family='Liberation Sans',sans-serif>Booking</text><path d="M350.5,417.75 A65.6,66 0 0 1 396.01,436.21 L375.32,457.82 A35.78,36 0 0 0 350.5,447.75 Z" fill="#4285f4" stroke="#fff" stroke-width="0.8"/><path d="M396.01,436.21 A65.6,66 0 1 1 350.5,417.75 L350.5,447.75 A35.78,36 0 1 0 375.32,457.82 Z" fill="#f28e3c" stroke="#fff" stroke-width="0.8"/><text x="369" y="439.5" text-anchor="middle" font-size="6.4" fill="#222" font-family='Liberation Sans',sans-serif>12.2%</text><text x="332" y="531.5" text-anchor="middle" font-size="6.4" fill="#222" font-family='Liberation Sans',sans-serif>87.8%</text><circle cx="443.8" cy="476.7" r="4.6" fill="#4285f4"/><text x="451.8" y="480.0" font-size="9.3" fill="#222" font-family='Liberation Sans',sans-serif>Maps</text><circle cx="443.8" cy="490.7" r="4.6" fill="#f28e3c"/><text x="451.8" y="494.0" font-size="9.3" fill="#222" font-family='Liberation Sans',sans-serif>Search</text><path d="M611.5,417.75 A65.6,66 0 0 1 675.86,470.98 L646.61,476.78 A35.78,36 0 0 0 611.5,447.75 Z" fill="#4285f4" stroke="#fff" stroke-width="0.8"/><path d="M675.86,470.98 A65.6,66 0 1 1 611.5,417.75 L611.5,447.75 A35.78,36 0 1 0 646.61,476.78 Z" fill="#f28e3c" stroke="#fff" stroke-width="0.8"/><text x="643" y="446.5" text-anchor="middle" font-size="6.4" fill="#222" font-family='Liberation Sans',sans-serif>21.9%</text><text x="580" y="523.5" text-anchor="middle" font-size="6.4" fill="#222" font-family='Liberation Sans',sans-serif>78.1%</text><circle cx="704.8" cy="476.7" r="4.6" fill="#4285f4"/><text x="712.9" y="480.0" font-size="9.3" fill="#222" font-family='Liberation Sans',sans-serif>Desktop</text><circle cx="704.8" cy="490.7" r="4.6" fill="#f28e3c"/><text x="712.9" y="494.0" font-size="9.3" fill="#222" font-family='Liberation Sans',sans-serif>Mobile</text></svg>
</body></html>
